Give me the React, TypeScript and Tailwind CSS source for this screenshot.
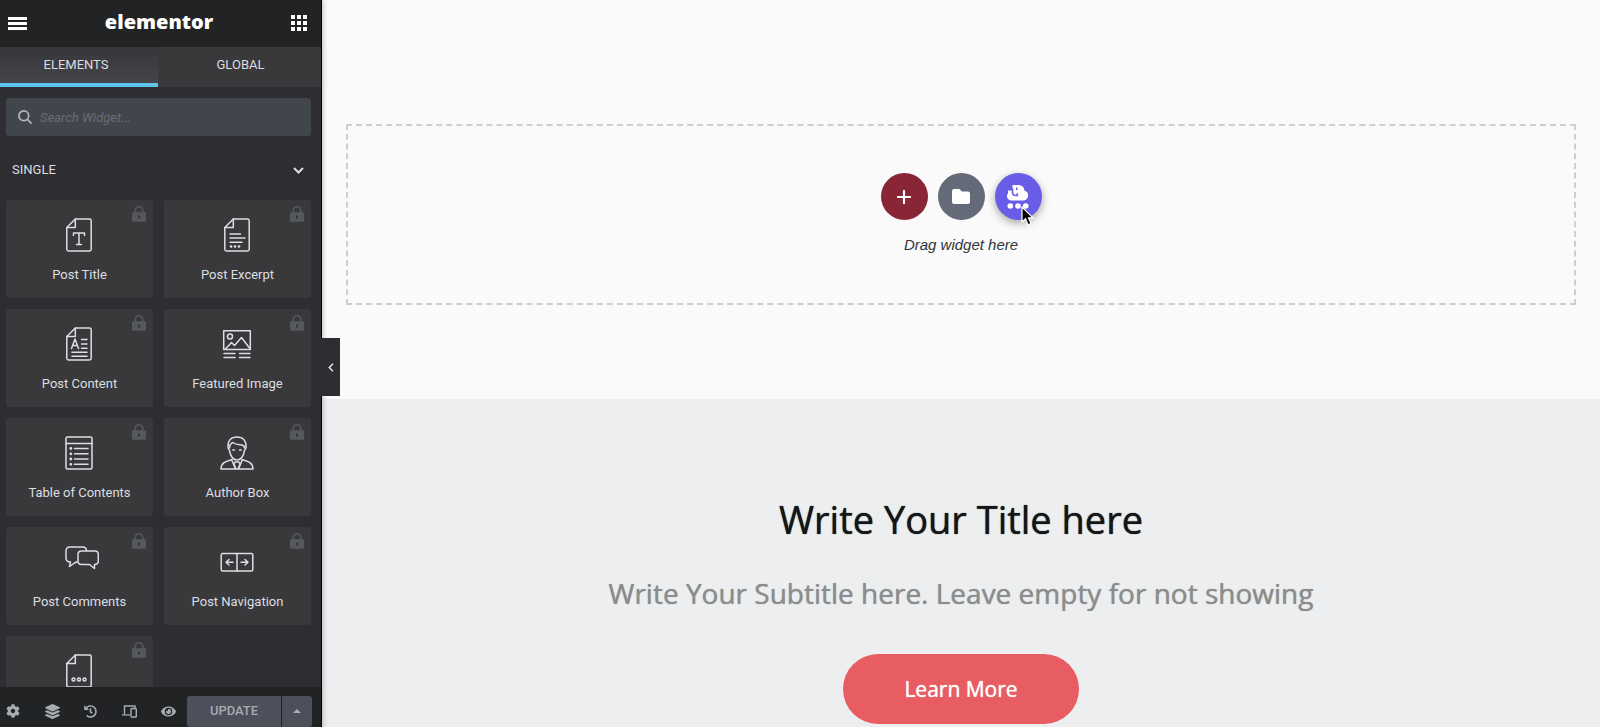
import type { ReactNode } from "react";
import { FaCog, FaEye, FaHistory, FaLayerGroup } from "react-icons/fa";

const Line = ({ children }: { children: ReactNode }) => (
  <svg
    viewBox="0 0 34 34"
    className="size-[34px]"
    fill="none"
    stroke="currentColor"
    strokeWidth="1.5"
    strokeLinecap="round"
    strokeLinejoin="round"
    aria-hidden="true"
  >
    {children}
  </svg>
);

const Sheet = () => (
  <>
    <path d="M13.3 1H27.5a1.7 1.7 0 0 1 1.7 1.7V31.3a1.7 1.7 0 0 1-1.7 1.7H6.5a1.7 1.7 0 0 1-1.7-1.7V9.5Z" />
    <path d="M13.3 1V9.5H4.800" />
  </>
);

const icons: Record<string, ReactNode> = {
  title: (
    <Line>
      <Sheet />
      <path d="M11.500 17.500V15H22.500V17.500M17 15V26.500M14.500 26.500H19.500" />
    </Line>
  ),
  excerpt: (
    <Line>
      <Sheet />
      <path d="M10 16H20.500M10 20H25M10 24.300H22" />
      <path d="M11 28.500h.1M15 28.500h.1M19 28.500h.1" strokeWidth="2.600" />
    </Line>
  ),
  content: (
    <Line>
      <Sheet />
      <path d="M9.500 21.500 13 12 16.500 21.500M10.700 18.500H15.300M19.500 12.500H25M19.500 17H25M19.500 21.300H25M10 25.300H25M10 29.300H25" />
    </Line>
  ),
  image: (
    <Line>
      <rect x="3.700" y="3.700" width="26.600" height="18.800" />
      <circle cx="10" cy="9.500" r="2.500" />
      <path d="M5.500 22 11.500 15.500 14.500 18.500 21.500 10.500 29.500 21M4 26.500H15M19.500 26.500H30M4 30.500H15M19.500 30.500H30" />
    </Line>
  ),
  toc: (
    <Line>
      <rect x="4" y="1" width="26" height="32" rx="1.500" />
      <path d="M4 7.500H30M12.500 12.500H26M12.500 17.800H26M12.500 23H26M12.500 28.300H26" />
      <path d="M8.800 12.500h.1M8.800 17.800h.1M8.800 23h.1M8.800 28.300h.1" strokeWidth="2.800" />
    </Line>
  ),
  author: (
    <Line>
      <path d="M8 11.500C7.500 4.500 11 1 17 1s9.500 3.500 9 10.500c-.2 1.500-1 2.500-1.500 3C23.500 20 21 24 17 24s-6.500-4-7.500-9.500c-.5-.5-1.300-1.500-1.500-3Z" />
      <path d="M9.500 12c0-2.500 1-4.500 3.500-5.500 3 2.500 6 2 9 2.500 2 .5 2.500 1.500 2.500 3M12.800 14h1.700M19.500 14h1.700" />
      <path d="M12 23.500C7 25 1 26 1 33H33c0-7-6-8-11-9.500M11.800 24 15.500 33M22.200 24 18.500 33M15 26h4l1 2-2 5h-2l-2-5Z" />
    </Line>
  ),
  comments: (
    <svg
      viewBox="0 0 40 24"
      className="mt-px h-6 w-10"
      fill="none"
      stroke="currentColor"
      strokeWidth="1.5"
      strokeLinejoin="round"
      aria-hidden="true"
    >
      <g transform="translate(6 0)">
        <path d="M12.500 15.500 9.500 17 4.500 20.500 5.500 16C2.500 16 1 14.500 1 12V5C1 2.500 2.500 1 5 1H17.500C20 1 21.500 2.500 21.500 5" />
        <path d="M16.500 5H30C32.500 5 33.300 6.500 33.300 8.500V15C33.300 17.500 32 18.500 29.500 18.500V22.500L24.500 18.500H16.500C14 18.500 13 17 13 15V8.500C13 6.500 14.500 5 16.500 5Z" />
      </g>
    </svg>
  ),
  navigation: (
    <Line>
      <rect x="1.200" y="8.500" width="31.600" height="17.500" rx="1.500" />
      <path d="M17 8.500V26M6 17.300H13M9 14.500 6 17.300 9 20M21 17.300H28M25 14.500 28 17.300 25 20" />
    </Line>
  ),
  info: (
    <Line>
      <Sheet />
      <circle cx="11.500" cy="25.500" r="1.500" />
      <circle cx="17" cy="25.500" r="1.500" />
      <circle cx="22.500" cy="25.500" r="1.500" />
    </Line>
  ),
};

const widgets: { label?: string; icon: string }[] = [
  { label: "Post Title", icon: "title" },
  { label: "Post Excerpt", icon: "excerpt" },
  { label: "Post Content", icon: "content" },
  { label: "Featured Image", icon: "image" },
  { label: "Table of Contents", icon: "toc" },
  { label: "Author Box", icon: "author" },
  { label: "Post Comments", icon: "comments" },
  { label: "Post Navigation", icon: "navigation" },
  { icon: "info" },
];

const Lock = () => (
  <svg viewBox="0 0 14 16" className="absolute top-1.5 right-[7px] h-4 w-3.5 text-[#55595c]" aria-hidden="true">
    <path d="M3.300 7V4.500a3.700 3.700 0 0 1 7.400 0V7" fill="none" stroke="currentColor" strokeWidth="1.600" />
    <path
      fillRule="evenodd"
      fill="currentColor"
      d="M1.300 6.300H12.700A1.200 1.200 0 0 1 14 7.500V14.500A1.300 1.300 0 0 1 12.700 15.800H1.300A1.300 1.300 0 0 1 0 14.500V7.500A1.200 1.200 0 0 1 1.300 6.300ZM6 9.500V12.700H8V9.500Z"
    />
  </svg>
);

const Devices = () => (
  <svg viewBox="0 0 15 13" className="h-[13px] w-[15px]" fill="none" stroke="currentColor" strokeWidth="1.400" aria-hidden="true">
    <path d="M13 3V1H2.500V9M0 9.900H8" />
    <rect x="9" y="3.500" width="5.300" height="8.500" rx="0.800" />
  </svg>
);

const tools = [
  { label: "Settings", icon: <FaCog className="size-3.5" /> },
  { label: "Navigator", icon: <FaLayerGroup className="size-[15px]" /> },
  { label: "History", icon: <FaHistory className="size-[13px]" /> },
  { label: "Responsive Mode", icon: <Devices /> },
  { label: "Preview Changes", icon: <FaEye className="size-[15px]" /> },
];

function Sidebar() {
  return (
    <aside className="relative z-10 flex w-[322px] shrink-0 flex-col border-r border-black bg-[#2e2d32] text-[#dcdee1] shadow-[2px_0_4px_rgba(0,0,0,0.18)]">
      <header className="flex h-[47px] shrink-0 items-center justify-between bg-[#222325] pr-3.5 pl-2 text-white">
        <button type="button" aria-label="Menu" className="flex h-[13px] w-[19px] flex-col justify-between">
          <span className="h-[3px] bg-white" />
          <span className="h-[3px] bg-white" />
          <span className="h-[3px] bg-white" />
        </button>
        <h1 className="pb-1 font-['Open_Sans',sans-serif] text-[20px] leading-6 font-extrabold">elementor</h1>
        <button type="button" aria-label="Widgets" className="mb-px grid size-4 grid-cols-3 gap-0.5">
          {Array.from({ length: 9 }, (_, i) => (
            <span key={i} className="size-1 bg-white" />
          ))}
        </button>
      </header>

      <div role="tablist" className="flex h-10 shrink-0 text-[13px]">
        <button
          type="button"
          role="tab"
          aria-selected="true"
          className="w-[158px] border-b-4 border-[#5fc5ee] bg-linear-to-b from-[#37373a] to-[#44444a] pr-1.5"
        >
          ELEMENTS
        </button>
        <button type="button" role="tab" aria-selected="false" className="flex-1 bg-[#39393b] pb-1 pl-0.5">
          GLOBAL
        </button>
      </div>

      <label className="mt-[11px] mr-2.5 ml-1.5 flex h-[38px] shrink-0 items-center gap-2 rounded-[3px] bg-[#41454c] pl-3">
        <svg viewBox="0 0 14 14" className="size-3.5 text-[#b4b7bd]" fill="none" stroke="currentColor" strokeWidth="1.700" aria-hidden="true">
          <circle cx="5.800" cy="5.800" r="4.900" />
          <path d="M9.500 9.500 13.500 13.500" />
        </svg>
        <input
          type="text"
          aria-label="Search Widget"
          placeholder="Search Widget..."
          className="h-full min-w-0 flex-1 bg-transparent text-[13px] italic outline-none placeholder:text-[#6c6c6f]"
        />
      </label>

      <button type="button" className="mt-6 flex h-5 shrink-0 items-center justify-between pr-[17px] pl-3 text-[13px]">
        SINGLE
        <svg viewBox="0 0 11 7" className="h-[7px] w-[11px]" fill="none" stroke="currentColor" strokeWidth="2" aria-hidden="true">
          <path d="M1 1 5.500 5.500 10 1" />
        </svg>
      </button>

      <div className="mt-5 grid min-h-0 flex-1 auto-rows-[98px] grid-cols-2 gap-[11px] overflow-hidden pr-2.5 pl-1.5">
        {widgets.map((w) => (
          <button
            key={w.icon}
            type="button"
            aria-label={w.label ?? w.icon}
            className="relative flex flex-col items-center rounded-[3px] bg-[#39393b] pt-[18px] text-[13px] leading-4"
          >
            <Lock />
            <span className="flex h-[34px] pr-0.5">{icons[w.icon]}</span>
            {w.label && <span className="mt-[15px]">{w.label}</span>}
          </button>
        ))}
      </div>

      <footer className="flex h-10 shrink-0 items-center justify-between bg-[#222325] pt-2 pr-[9px] pl-1.5 text-[#a7abb2]">
        <div className="flex w-[170px] items-center justify-between">
          {tools.map((t) => (
            <button key={t.label} type="button" aria-label={t.label}>
              {t.icon}
            </button>
          ))}
        </div>
        <div className="flex h-[31px] gap-px text-[13px] font-medium">
          <button type="button" className="w-[94px] rounded-l-[3px] bg-[#4b505a]">
            UPDATE
          </button>
          <button type="button" aria-label="Save options" className="flex w-[30px] items-center justify-center rounded-r-[3px] bg-[#4b505a]">
            <svg viewBox="0 0 8 4" className="h-1 w-2" fill="currentColor" aria-hidden="true">
              <path d="M4 0 8 4H0Z" />
            </svg>
          </button>
        </div>
      </footer>

      <button
        type="button"
        aria-label="Hide panel"
        className="absolute top-[338px] left-full flex h-[58px] w-[19px] items-center justify-center bg-[#2e2d32]"
      >
        <svg viewBox="0 0 6 9" className="h-[9px] w-1.5" fill="none" stroke="currentColor" strokeWidth="1.600" aria-hidden="true">
          <path d="M5 .800 1.300 4.500 5 8.200" />
        </svg>
      </button>
    </aside>
  );
}

function DropZone() {
  return (
    <section className="bg-[#fafafa] px-6 pt-[124px] pb-[94px]">
      <div className="flex flex-col items-center border-2 border-dashed border-[#cbced3] pt-[47px] pb-12">
        <div className="flex gap-2.5">
          <button type="button" aria-label="Add section" className="flex size-[47px] items-center justify-center rounded-full bg-[#882635]">
            <svg viewBox="0 0 14 14" className="size-3.5" stroke="#fff" strokeWidth="2.200" strokeLinecap="round" aria-hidden="true">
              <path d="M7 1V13M1 7H13" />
            </svg>
          </button>
          <button type="button" aria-label="Add template" className="flex size-[47px] items-center justify-center rounded-full bg-[#646a77]">
            <svg viewBox="0 0 18 15" className="h-[15px] w-[18px]" fill="#fff" aria-hidden="true">
              <path d="M2 0H7.500L10 2.500H16A2 2 0 0 1 18 4.500V13A2 2 0 0 1 16 15H2A2 2 0 0 1 0 13V2A2 2 0 0 1 2 0Z" />
            </svg>
          </button>
          <button
            type="button"
            aria-label="Add cloud template"
            className="relative flex size-[47px] items-center justify-center rounded-full bg-[#695de8] shadow-[0_3px_8px_rgba(0,0,0,0.35)]"
          >
            <svg viewBox="0 0 22 24" className="h-6 w-[22px]" fill="#fff" aria-hidden="true">
              <path d="M4.800 15.500A4.300 4.300 0 0 1 1 8.500V5.500H5.500V0H11C15 0 17.500 2.500 17.300 5.500A5.100 5.100 0 0 1 16.500 15.500Z" />
              <path d="M5.500 3.500V7Q5.500 10.500 8.500 10.500H10.300V8.200" fill="none" stroke="#695de8" strokeWidth="1.600" />
              <path d="M9 2.500H10.500V5H9Z" fill="#695de8" />
              <circle cx="3.300" cy="21" r="2.800" />
              <circle cx="11" cy="21" r="2.800" />
              <circle cx="18.700" cy="21" r="2.800" />
            </svg>
            <svg viewBox="0 0 13 20" className="absolute top-[33px] left-[26px] h-5 w-[13px]" aria-hidden="true">
              <path d="M1 1V16L4.500 12.800 7 18.800 10 17.500 7.500 11.800H12Z" fill="#000" stroke="#fff" strokeWidth="1.200" />
            </svg>
          </button>
        </div>
        <p className="mt-[15px] font-['Liberation_Sans',sans-serif] text-[15px] leading-5 text-[#30343b] italic">Drag widget here</p>
      </div>
    </section>
  );
}

function CallToAction() {
  return (
    <section className="flex flex-1 flex-col items-center bg-[#edeeef] px-6 pt-[92px] text-center font-['Open_Sans',sans-serif]">
      <h2 className="text-[38px] leading-[56px] text-[#151617] [text-shadow:0_0_1px_currentColor]">Write Your Title here</h2>
      <p className="mt-[26px] text-[28px] leading-10 text-[#8b8c8d] [text-shadow:0_0_1px_currentColor]">
        Write Your Subtitle here. Leave empty for not showing
      </p>
      <a
        href="#learn-more"
        className="mt-[41px] flex h-[70px] items-center rounded-full bg-[#e75d61] px-[61px] pt-0.5 text-[21px] text-white [text-shadow:0_0_1px_currentColor]"
      >
        Learn More
      </a>
    </section>
  );
}

export default function App() {
  return (
    <div className="flex h-screen overflow-hidden bg-[#edeeef] font-[Roboto,sans-serif]">
      <Sidebar />
      <main className="flex min-w-0 flex-1 flex-col">
        <DropZone />
        <CallToAction />
      </main>
    </div>
  );
}
